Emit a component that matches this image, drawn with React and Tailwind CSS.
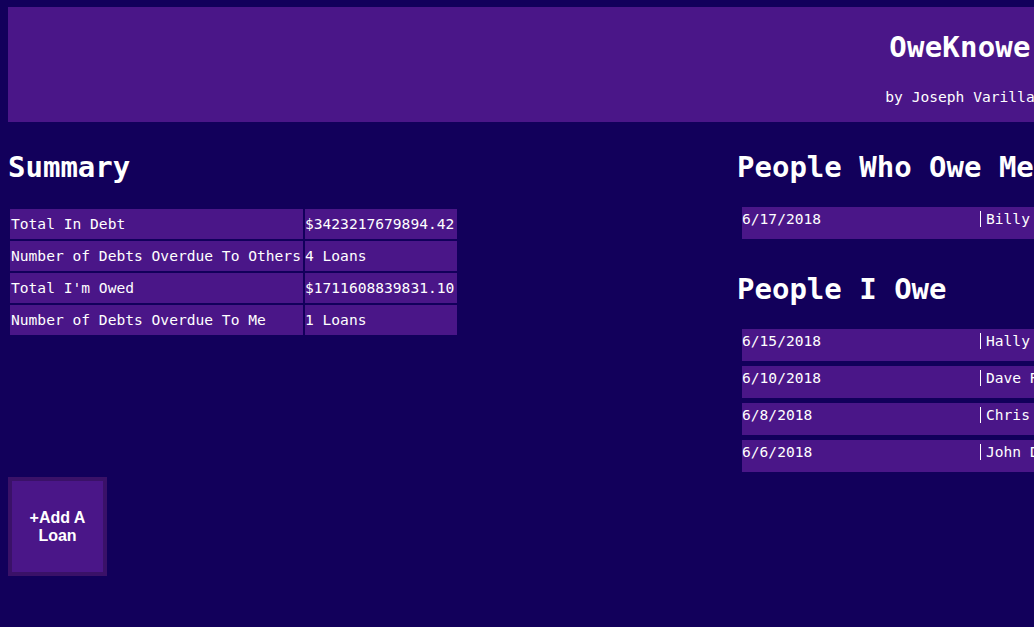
const summary = [
  ["Total In Debt", "$3423217679894.42"],
  ["Number of Debts Overdue To Others", "4 Loans"],
  ["Total I'm Owed", "$1711608839831.10"],
  ["Number of Debts Overdue To Me", "1 Loans"],
];

const oweMe = [{ date: "6/17/2018", name: "Billy Bob" }];

const iOwe = [
  { date: "6/15/2018", name: "Hally Smith" },
  { date: "6/10/2018", name: "Dave Roberts" },
  { date: "6/8/2018", name: "Chris Jones" },
  { date: "6/6/2018", name: "John Doe" },
];

const mono = "font-['DejaVu_Sans_Mono',monospace]";

function LoanList({ title, loans }) {
  return (
    <div>
      <h1 className="text-[29px] font-bold leading-[34px] h-[34px] text-white">{title}</h1>
      <div className="flex flex-col gap-[5px] pl-[5px] mt-[23px]">
        {loans.map((l) => (
          <div key={l.date} className="flex h-[32px] bg-[#4a1688] pt-[3px] text-[14.6px] leading-[18px] text-white">
            <span className="w-[238px]">{l.date}</span>
            <span className="w-[300px] flex items-start">
              <span className="w-px h-[16px] bg-white mt-[1px] mr-[5px]" />
              {l.name}
            </span>
          </div>
        ))}
      </div>
    </div>
  );
}

export default function App() {
  return (
    <div className={`w-[1034px] h-[627px] overflow-hidden bg-[#12005b] ${mono}`}>
      <div className="w-[1920px] px-[8px] pt-[7px]">
        <header className="bg-[#4a1688] h-[115px] flex flex-col items-center text-white w-[1904px]">
          <h1 className="text-[29px] font-bold leading-[34px] mt-[23px] tracking-[0.2px]">OweKnowe</h1>
          <p className="text-[14.6px] leading-[18px] mt-[24px]">by Joseph Varilla</p>
        </header>

        <div className="flex mt-[28px]">
          <div className="w-[730px] flex flex-col">
            <h1 className="text-[29px] font-bold leading-[34px] h-[34px] text-white">Summary</h1>
            <table className="mt-[23px] border-separate border-spacing-[2px] text-white text-[14.6px] w-fit">
              <tbody>
                {summary.map(([k, v]) => (
                  <tr key={k} className="h-[30px]">
                    <td className="bg-[#4a1688] pl-[1px] pr-[2px] whitespace-nowrap">{k}</td>
                    <td className="bg-[#4a1688] pr-[2px] w-[152px] whitespace-nowrap">{v}</td>
                  </tr>
                ))}
              </tbody>
            </table>
            <button className="mt-[140px] w-[99px] h-[99px] bg-[#4a1688] border-[4px] border-[#3a1168] text-white font-['Liberation_Sans',Arial,sans-serif] font-bold text-[16px] leading-[18px] px-[6px]">
              +Add A Loan
            </button>
          </div>

          <div className="flex flex-col gap-[33px] -ml-[1px]">
            <LoanList title="People Who Owe Me" loans={oweMe} />
            <LoanList title="People I Owe" loans={iOwe} />
          </div>
        </div>
      </div>
    </div>
  );
}
